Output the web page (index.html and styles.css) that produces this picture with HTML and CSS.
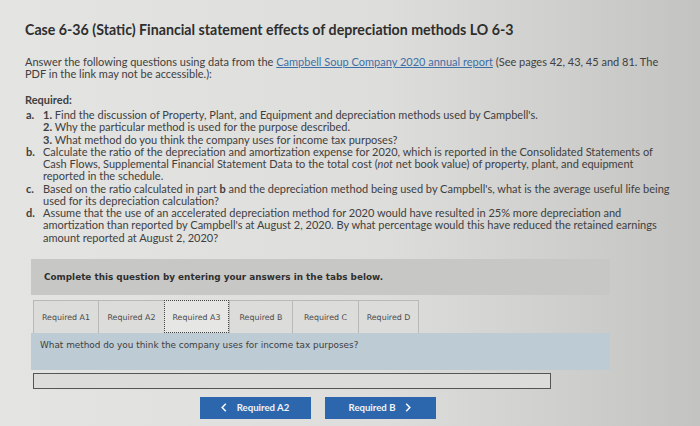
FILE: index.html
```html
<!DOCTYPE html>
<html>
<head>
<meta charset="utf-8">
<link rel="stylesheet" href="styles.css">
</head>
<body>
<div class="page">
  <h1 class="title">Case 6-36 (Static) Financial statement effects of depreciation methods LO 6-3</h1>
  <p class="intro">Answer the following questions using data from the <a class="link" href="#">Campbell Soup Company 2020 annual report</a> (See pages 42, 43, 45 and 81. The<br>PDF in the link may not be accessible.):</p>
  <div class="req-head">Required:</div>
  <ol class="req-list">
    <li class="req-item"><span class="lbl">a.</span>
      <div class="req-body">
        <div><b>1.</b> Find the discussion of Property, Plant, and Equipment and depreciation methods used by Campbell's.</div>
        <div><b>2.</b> Why the particular method is used for the purpose described.</div>
        <div><b>3.</b> What method do you think the company uses for income tax purposes?</div>
      </div>
    </li>
    <li class="req-item"><span class="lbl">b.</span>
      <div class="req-body">Calculate the ratio of the depreciation and amortization expense for 2020, which is reported in the Consolidated Statements of<br>Cash Flows, Supplemental Financial Statement Data to the total cost (<i>not</i> net book value) of property, plant, and equipment<br>reported in the schedule.</div>
    </li>
    <li class="req-item"><span class="lbl">c.</span>
      <div class="req-body">Based on the ratio calculated in part <b>b</b> and the depreciation method being used by Campbell's, what is the average useful life being<br>used for its depreciation calculation?</div>
    </li>
    <li class="req-item"><span class="lbl">d.</span>
      <div class="req-body">Assume that the use of an accelerated depreciation method for 2020 would have resulted in 25% more depreciation and<br>amortization than reported by Campbell's at August 2, 2020. By what percentage would this have reduced the retained earnings<br>amount reported at August 2, 2020?</div>
    </li>
  </ol>

  <div class="question">
    <div class="instr">Complete this question by entering your answers in the tabs below.</div>
    <div class="tabs">
      <div class="tab t1">Required A1</div>
      <div class="tab t2">Required A2</div>
      <div class="tab t3 active">Required A3</div>
      <div class="tab t4">Required B</div>
      <div class="tab t5">Required C</div>
      <div class="tab t6">Required D</div>
    </div>
    <div class="panel">What method do you think the company uses for income tax purposes?</div>
    <div class="answer"></div>
    <div class="nav">
      <div class="btn prev"><svg class="chev" width="6" height="9" viewBox="0 0 6 9"><polyline points="4.8,0.8 1.2,4.5 4.8,8.2" fill="none" stroke="#f2f4f8" stroke-width="1.6"/></svg>Required A2</div>
      <div class="btn next">Required B<svg class="chev" width="6" height="9" viewBox="0 0 6 9"><polyline points="1.2,0.8 4.8,4.5 1.2,8.2" fill="none" stroke="#f2f4f8" stroke-width="1.6"/></svg></div>
    </div>
  </div>
</div>
</body>
</html>
```

FILE: styles.css
```css
html, body {
  margin: 0;
  padding: 0;
}
body {
  width: 700px;
  height: 426px;
  overflow: hidden;
  font-family: "Lato", "Open Sans", sans-serif;
  color: #404040;
  background: linear-gradient(to right, #e4e4e2 0%, #dddddb 55%, #cfcfcd 80%, #c3c3c1 100%);
}
.page {
  padding: 21px 0 0 25px;
}
.title {
  margin: 0;
  font-size: 14.2px;
  line-height: 18px;
  font-weight: 700;
  color: #2e2e2e;
}
.intro {
  margin: 17px 0 0 0;
  white-space: nowrap;
  font-size: 11px;
  line-height: 12px;
}
.link {
  color: #3e6fa6;
  text-decoration: underline;
}
.req-head {
  margin-top: 14px;
  font-size: 11px;
  line-height: 12px;
  font-weight: 700;
}
.req-list {
  list-style: none;
  margin: 3px 0 0 0;
  padding: 0;
  font-size: 11px;
  line-height: 12.27px;
  white-space: nowrap;
}
.req-item {
  display: flex;
}
.lbl {
  width: 17px;
  flex: none;
  font-weight: 700;
  padding-left: 1px;
}
.req-body b {
  font-weight: 700;
}
.question {
  margin: 15px 0 0 6px;
  width: 579px;
}
.instr {
  height: 36px;
  box-sizing: border-box;
  padding-left: 13px;
  display: flex;
  align-items: center;
  background: #c7c7c5;
  font-family: "DejaVu Sans", Verdana, sans-serif;
  font-weight: 700;
  font-size: 8.85px;
  color: #2f2f2f;
}
.tabs {
  display: flex;
  margin: 5px 0 0 2px;
  height: 33px;
}
.tab {
  box-sizing: border-box;
  height: 33px;
  padding-top: 2px;
  display: flex;
  align-items: center;
  justify-content: center;
  border: 1px solid #b9b9b7;
  border-right: none;
  border-bottom: none;
  background: #dcdcda;
  font-family: "DejaVu Sans", Verdana, sans-serif;
  font-size: 7.9px;
  color: #4a4a4a;
}
.t1 { width: 65px; }
.t2 { width: 66px; }
.t3 { width: 65px; }
.t4 { width: 63px; }
.t5 { width: 66px; }
.t6 { width: 61px; border-right: 1px solid #b9b9b7; }
.tab.active {
  background: #e6e6e4;
  border: 1px dotted #444;
}
.panel {
  height: 37px;
  box-sizing: border-box;
  padding: 7px 0 0 9px;
  background: #bdcbd5;
  font-family: "DejaVu Sans", Verdana, sans-serif;
  font-size: 8.9px;
  line-height: 11px;
  color: #3d3d3d;
}
.answer {
  margin: 3px 0 0 2px;
  width: 518px;
  height: 16px;
  box-sizing: border-box;
  border: 1px solid #555;
  background: #dcdcda;
}
.nav {
  display: flex;
  justify-content: center;
  gap: 14px;
  margin-top: 8px;
  padding-right: 6px;
}
.btn {
  width: 111px;
  height: 22px;
  box-sizing: border-box;
  display: flex;
  align-items: center;
  justify-content: center;
  background: #2c67ad;
  color: #f2f4f8;
  font-family: "Lato", sans-serif;
  font-weight: 700;
  font-size: 9.6px;
}
.chev {
  display: block;
  margin: 0 10px;
}
.prev .chev { margin-left: 0; }
.next .chev { margin-right: 0; }
```
